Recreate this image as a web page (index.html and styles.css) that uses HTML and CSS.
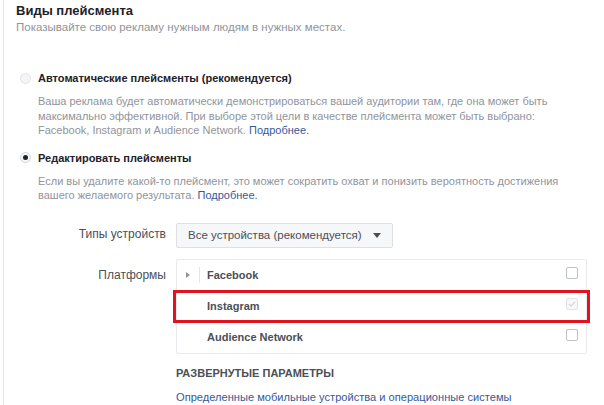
FILE: index.html
```html
<!DOCTYPE html>
<html lang="ru">
<head>
<meta charset="utf-8">
<link rel="stylesheet" href="styles.css">
</head>
<body>
<div class="panel">
  <h1 class="title">Виды плейсмента</h1>
  <p class="subtitle">Показывайте свою рекламу нужным людям в нужных местах.</p>

  <div class="option option-first">
    <div class="option-head">
      <span class="radio"></span>
      <span class="option-label">Автоматические плейсменты (рекомендуется)</span>
    </div>
    <p class="option-desc">Ваша реклама будет автоматически демонстрироваться вашей аудитории там, где она может быть<br>максимально эффективной. При выборе этой цели в качестве плейсмента может быть выбрано:<br>Facebook, Instagram и Audience Network. <a class="link">Подробнее.</a></p>
  </div>

  <div class="option option-second">
    <div class="option-head">
      <span class="radio radio-on"></span>
      <span class="option-label">Редактировать плейсменты</span>
    </div>
    <p class="option-desc">Если вы удалите какой-то плейсмент, это может сократить охват и понизить вероятность достижения<br>вашего желаемого результата. <a class="link">Подробнее.</a></p>
  </div>

  <div class="form">
    <div class="form-label form-label-devices">Типы устройств</div>
    <div class="form-control">
      <button class="select"><span class="select-text">Все устройства (рекомендуется)</span><span class="caret"></span></button>
    </div>

    <div class="form-label form-label-platforms">Платформы</div>
    <div class="form-control">
      <div class="platforms">
        <div class="platform">
          <span class="expander"><span class="tri"></span></span>
          <span class="platform-name">Facebook</span>
          <span class="checkbox"></span>
        </div>
        <div class="platform platform-highlight">
          <span class="expander expander-empty"></span>
          <span class="platform-name">Instagram</span>
          <span class="checkbox checkbox-disabled">
            <svg viewBox="0 0 12 12" width="10" height="10"><path d="M2.5 6.2 L5 8.5 L9.5 3.5" fill="none" stroke="#cfd2d7" stroke-width="1.3"/></svg>
          </span>
        </div>
        <div class="platform">
          <span class="expander expander-empty"></span>
          <span class="platform-name">Audience Network</span>
          <span class="checkbox"></span>
        </div>
      </div>
      <div class="advanced">РАЗВЕРНУТЫЕ ПАРАМЕТРЫ</div>
      <a class="link advanced-link">Определенные мобильные устройства и операционные системы</a>
    </div>
  </div>
</div>
</body>
</html>
```
FILE: styles.css
```css
* { box-sizing: border-box; }
html, body { margin: 0; padding: 0; background: #fff; }
body {
  font-family: "Liberation Sans", Arial, sans-serif;
  font-size: 12px;
  color: #1d2129;
  overflow: hidden;
}
.panel {
  margin-left: 3px;
  border-left: 1px solid #e6e7e9;
  padding: 3px 0 0 12px;
  height: 405px;
}
.title {
  margin: 0;
  font-size: 13px;
  font-weight: bold;
  line-height: 16px;
  color: #1d2129;
}
.subtitle {
  margin: 0;
  font-size: 11.5px;
  line-height: 16px;
  color: #90949c;
}
.option { padding-left: 4px; }
.option-first { margin-top: 35px; }
.option-second { margin-top: 12px; }
.option-head {
  display: flex;
  align-items: center;
  gap: 7px;
  height: 16px;
}
.radio {
  width: 11px;
  height: 11px;
  border-radius: 50%;
  border: 1px solid #e1e3e6;
  background: #f3f4f6;
  flex: none;
  display: flex;
  align-items: center;
  justify-content: center;
}
.radio-on { border-color: #d4d6da; background: #f5f6f7; }
.radio-on::after {
  content: "";
  width: 5px;
  height: 5px;
  border-radius: 50%;
  background: #1d2129;
}
.option-label { color: #1d2129; font-weight: bold; font-size: 11px; }
.option-desc {
  margin: 8px 0 0 18px;
  font-size: 11px;
  line-height: 14.5px;
  color: #90949c;
  white-space: nowrap;
}
.link { color: #365899; text-decoration: none; }

.form {
  display: grid;
  grid-template-columns: 150px 1fr;
  column-gap: 10px;
  margin-top: 20px;
}
.form-label {
  text-align: right;
  color: #4b4f56;
  font-size: 12px;
  line-height: 16px;
}
.form-label-devices { padding-top: 3px; }
.form-label-platforms { padding-top: 19px; }
.select {
  height: 25px;
  width: 217px;
  padding: 0 11px;
  border: 1px solid #dddfe2;
  border-radius: 2px;
  background: #f6f7f9;
  font-family: inherit;
  font-size: 11.5px;
  color: #4b4f56;
  display: flex;
  align-items: center;
  justify-content: space-between;
  white-space: nowrap;
}
.caret {
  width: 0; height: 0;
  border-left: 4px solid transparent;
  border-right: 4px solid transparent;
  border-top: 5px solid #4b4f56;
}
.platforms {
  margin-top: 11px;
  width: 411px;
  border: 1px solid #e9eaed;
  border-radius: 2px;
}
.platform {
  display: flex;
  align-items: center;
  height: 31px;
  padding: 0 8px 0 0;
  position: relative;
}
.platform-highlight::after {
  content: "";
  position: absolute;
  left: -4px; right: -4px; top: -1px; bottom: -1px;
  border: 3px solid #e0141e;
  pointer-events: none;
}
.expander {
  width: 23px;
  height: 16px;
  display: flex;
  align-items: center;
  justify-content: center;
  border-right: 1px solid #e3e4e7;
  margin-right: 7px;
}
.expander-empty { border-right-color: transparent; }
.tri {
  width: 0; height: 0;
  border-top: 3.5px solid transparent;
  border-bottom: 3.5px solid transparent;
  border-left: 4px solid #90949c;
}
.platform-name { flex: 1; color: #4b4f56; font-weight: bold; font-size: 11px; }
.checkbox {
  width: 12px; height: 12px;
  border: 1px solid #bec2c9;
  border-radius: 2px;
  background: #fff;
  display: flex;
  align-items: center;
  justify-content: center;
  transform: translateY(-2px);
}
.checkbox-disabled { border-color: #e1e3e6; background: #f6f7f9; }
.advanced {
  margin-top: 11px;
  font-size: 11px;
  line-height: 16px;
  color: #4b4f56;
  font-weight: bold;
}
.advanced-link { display: block; margin-top: 8px; font-size: 11.1px; line-height: 16px; }
```
